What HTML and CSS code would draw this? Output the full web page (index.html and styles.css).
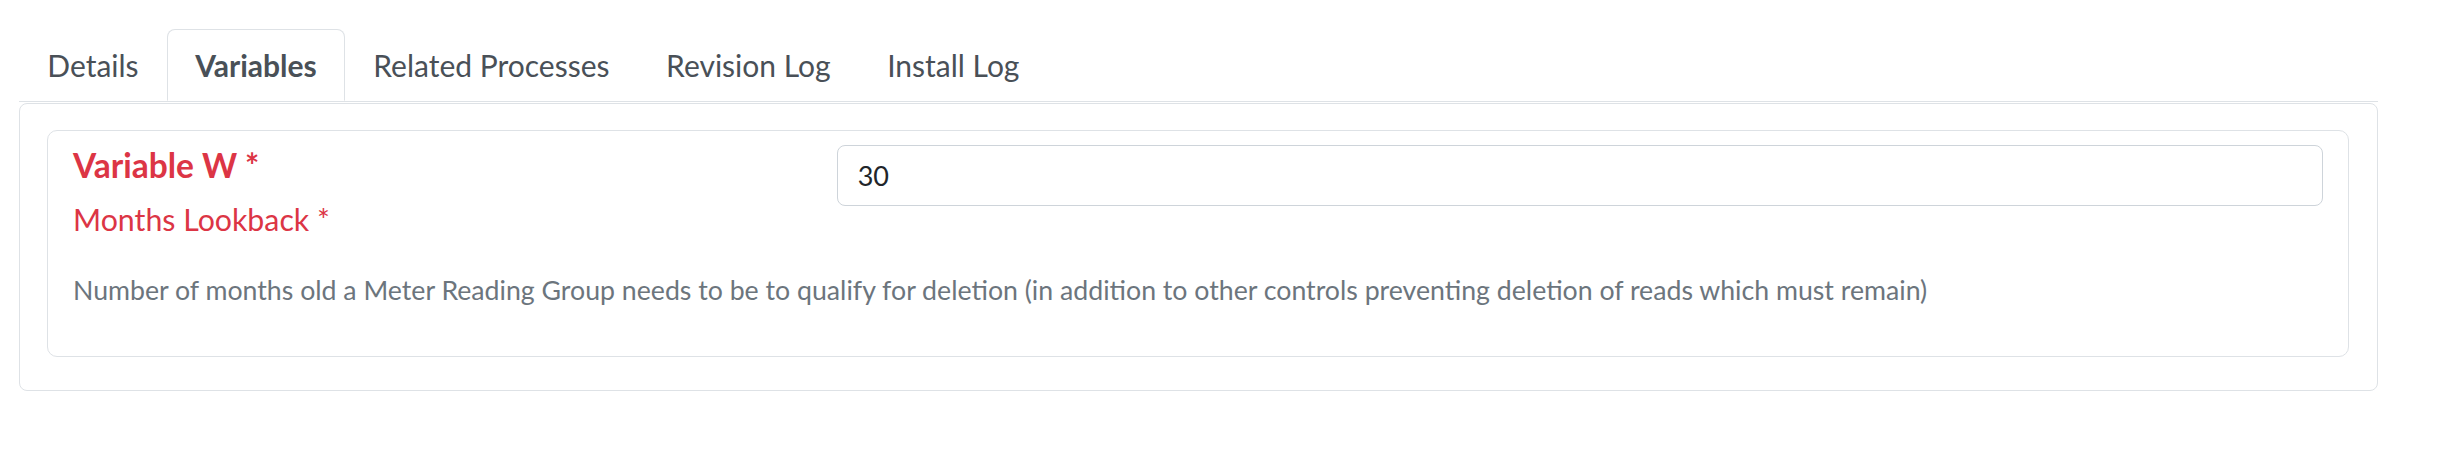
FILE: index.html
```html
<!DOCTYPE html>
<html lang="en">
<head>
<meta charset="utf-8">
<title>Variables</title>
<link rel="stylesheet" href="styles.css">
</head>
<body>
<div class="page">
  <ul class="nav-tabs">
    <li class="nav-item"><a class="nav-link">Details</a></li>
    <li class="nav-item"><a class="nav-link active">Variables</a></li>
    <li class="nav-item"><a class="nav-link">Related Processes</a></li>
    <li class="nav-item"><a class="nav-link">Revision Log</a></li>
    <li class="nav-item"><a class="nav-link">Install Log</a></li>
  </ul>
  <div class="tab-content">
    <div class="card">
      <div class="var-row">
        <div class="var-labels">
          <h5 class="var-title">Variable W *</h5>
          <label class="var-label" for="v-w">Months Lookback *</label>
        </div>
        <div class="var-input-col">
          <input id="v-w" class="form-control" type="text" value="30">
        </div>
      </div>
      <p class="var-help">Number of months old a Meter Reading Group needs to be to qualify for deletion (in addition to other controls preventing deletion of reads which must remain)</p>
    </div>
  </div>
</div>
</body>
</html>
```

FILE: styles.css
```css
html, body {
  margin: 0;
  padding: 0;
  background: #ffffff;
}

body {
  font-family: "Lato", "Open Sans", "Liberation Sans", sans-serif;
  color: #212529;
}

.page {
  padding: 29px 80px 0 19px;
}

.nav-tabs {
  display: flex;
  list-style: none;
  margin: 0;
  padding: 0;
  border-bottom: 1px solid #dee2e6;
}

.nav-link {
  display: block;
  padding: 13px 27.3px;
  font-size: 30px;
  line-height: 44px;
  color: #495057;
  border: 1px solid transparent;
  border-top-left-radius: 8px;
  border-top-right-radius: 8px;
  text-decoration: none;
}

.nav-link.active {
  font-weight: 700;
  border-color: #dee2e6 #dee2e6 transparent;
  background: #ffffff;
}

.tab-content {
  margin-top: 1px;
  border: 1px solid #dee2e6;
  border-radius: 8px;
  padding: 26px 28px 33px 27px;
}

.card {
  border: 1px solid #dee2e6;
  border-radius: 10px;
  padding: 14px 25px 46px 25px;
}

.var-row {
  display: grid;
  grid-template-columns: 1fr 2fr;
  column-gap: 20.5px;
  align-items: start;
}

.var-labels {
  display: flex;
  flex-direction: column;
}

.var-title {
  margin: 0 0 13px 0;
  font-size: 33.5px;
  line-height: 1.2;
  font-weight: 700;
  color: #dc3545;
}

.var-label {
  font-size: 30.3px;
  line-height: 43.5px;
  color: #dc3545;
}

.form-control {
  display: block;
  box-sizing: border-box;
  width: 100%;
  height: 61px;
  margin: 0;
  padding: 0 20px;
  font-family: "Lato", "Open Sans", "Liberation Sans", sans-serif;
  font-size: 27px;
  color: #212529;
  background: #ffffff;
  border: 1px solid #ced4da;
  border-radius: 8px;
  outline: none;
}

.var-help {
  margin: 28px 0 0 0;
  font-size: 26.7px;
  line-height: 40.5px;
  color: #6c757d;
}
```
